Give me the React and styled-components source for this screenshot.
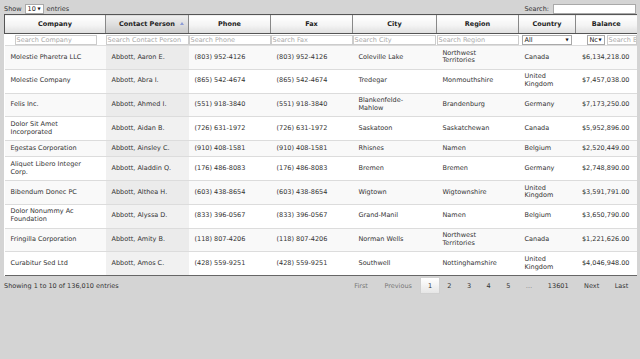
import React from "react";
import styled, { createGlobalStyle } from "styled-components";

const GlobalStyle = createGlobalStyle`
  html, body {
    margin: 0;
    padding: 0;
    background: #d4d4d4;
  }
  body {
    font-family: "DejaVu Sans", Verdana, sans-serif;
    font-size: 6.5px;
    color: #333;
  }
`;

const Wrapper = styled.div`
  padding: 3px 4px 0 4px;
  width: 632px;
`;

const TopBar = styled.div`
  display: flex;
  justify-content: space-between;
  align-items: center;
  height: 11px;
`;

const Length = styled.label`
  display: flex;
  align-items: center;
  gap: 3px;
`;

const SmallSelect = styled.div`
  display: flex;
  align-items: center;
  justify-content: space-between;
  box-sizing: border-box;
  width: ${p => p.$w}px;
  height: 10px;
  padding: 0 2px;
  background: #fff;
  border: 1px solid #a9a9a9;
  font-size: 6.5px;
  color: #222;
  &::after {
    content: "▼";
    font-size: 4px;
    color: #111;
  }
`;

const SearchLabel = styled.label`
  display: flex;
  align-items: center;
  gap: 4px;
`;

const SearchBox = styled.div`
  width: 83px;
  height: 10px;
  box-sizing: border-box;
  background: #fff;
  border: 1px solid #a9a9a9;
`;

const Table = styled.table`
  width: 632px;
  border-collapse: collapse;
  table-layout: fixed;
  background: #fff;
  border-bottom: 1px solid #666;
`;

const HeadCell = styled.th`
  position: relative;
  height: 18px;
  padding: 0;
  font-weight: bold;
  font-size: 6.5px;
  color: #222;
  text-align: center;
  background: ${p =>
    p.$sorted
      ? "linear-gradient(to bottom, #f0f0f0 0%, #dcdcdc 55%, #c8c8c8 100%)"
      : "linear-gradient(to bottom, #ffffff 0%, #f4f4f4 55%, #dedede 100%)"};
  border-top: 1px solid #555;
  border-bottom: 1px solid #555;
  border-left: 1px solid #888;
  &:first-child {
    border-left: 1px solid #555;
  }
`;

const SortArrow = styled.span`
  position: absolute;
  right: 4px;
  top: 7px;
  width: 0;
  height: 0;
  border-left: 2px solid transparent;
  border-right: 2px solid transparent;
  border-bottom: 3px solid #8c9bd6;
`;

const FilterRow = styled.tr`
  background: #fff;
`;

const FilterCell = styled.td`
  height: 11px;
  padding: 0;
  padding-left: ${p => p.$pad || 0}px;
  vertical-align: middle;
  overflow: hidden;
`;

const FilterInput = styled.div`
  box-sizing: border-box;
  flex: none;
  width: ${p => p.$w}px;
  height: 10px;
  border: 1px solid #ccc;
  background: #fff;
  color: #aaa;
  font-size: 6.5px;
  line-height: 8px;
  padding-left: 1px;
  overflow: hidden;
  white-space: nowrap;
`;

const FilterGroup = styled.div`
  display: flex;
  align-items: center;
  gap: 2px;
  padding-left: ${p => p.$pad || 0}px;
`;

const Row = styled.tr`
  background: ${p => (p.$odd ? "#f9f9f9" : "#fff")};
  border-top: 1px solid #dcdcdc;
`;

const Cell = styled.td`
  padding: 3.7px 10px 3.7px 6px;
  line-height: 7.7px;
  font-size: 6.5px;
  vertical-align: middle;
  color: #333;
  background: ${p => (p.$sorted ? (p.$odd ? "#ebebeb" : "#f1f1f1") : "transparent")};
  text-align: ${p => (p.$right ? "right" : "left")};
  ${p => p.$right && "padding-right: 7px; padding-left: 4px;"}
`;

const Footer = styled.div`
  display: flex;
  justify-content: space-between;
  align-items: flex-start;
  margin-top: 1px;
`;

const Info = styled.div`
  padding-top: 5px;
`;

const Pager = styled.div`
  display: flex;
  align-items: center;
`;

const PageButton = styled.span`
  display: inline-flex;
  align-items: center;
  justify-content: center;
  box-sizing: border-box;
  height: 17px;
  padding: 0 ${p => p.$px ?? 6.75}px;
  color: ${p => (p.$disabled ? "#777" : "#333")};
  background: ${p =>
    p.$current ? "linear-gradient(to bottom, #fff 0%, #e6e6e6 100%)" : "transparent"};
  border: 1px solid ${p => (p.$current ? "#d0d0d0" : "transparent")};
`;

const columns = [
  { key: "company", title: "Company", width: 101 },
  { key: "contact", title: "Contact Person", width: 83, sorted: true },
  { key: "phone", title: "Phone", width: 82 },
  { key: "fax", title: "Fax", width: 82 },
  { key: "city", title: "City", width: 84 },
  { key: "region", title: "Region", width: 82 },
  { key: "country", title: "Country", width: 57 },
  { key: "balance", title: "Balance", width: 61 }
];

const rows = [
  ["Molestie Pharetra LLC", "Abbott, Aaron E.", "(803) 952-4126", "(803) 952-4126", "Coleville Lake", "Northwest Territories", "Canada", "$6,134,218.00"],
  ["Molestie Company", "Abbott, Abra I.", "(865) 542-4674", "(865) 542-4674", "Tredegar", "Monmouthshire", "United Kingdom", "$7,457,038.00"],
  ["Felis Inc.", "Abbott, Ahmed I.", "(551) 918-3840", "(551) 918-3840", "Blankenfelde-Mahlow", "Brandenburg", "Germany", "$7,173,250.00"],
  ["Dolor Sit Amet Incorporated", "Abbott, Aidan B.", "(726) 631-1972", "(726) 631-1972", "Saskatoon", "Saskatchewan", "Canada", "$5,952,896.00"],
  ["Egestas Corporation", "Abbott, Ainsley C.", "(910) 408-1581", "(910) 408-1581", "Rhisnes", "Namen", "Belgium", "$2,520,449.00"],
  ["Aliquet Libero Integer Corp.", "Abbott, Aladdin Q.", "(176) 486-8083", "(176) 486-8083", "Bremen", "Bremen", "Germany", "$2,748,890.00"],
  ["Bibendum Donec PC", "Abbott, Althea H.", "(603) 438-8654", "(603) 438-8654", "Wigtown", "Wigtownshire", "United Kingdom", "$3,591,791.00"],
  ["Dolor Nonummy Ac Foundation", "Abbott, Alyssa D.", "(833) 396-0567", "(833) 396-0567", "Grand-Manil", "Namen", "Belgium", "$3,650,790.00"],
  ["Fringilla Corporation", "Abbott, Amity B.", "(118) 807-4206", "(118) 807-4206", "Norman Wells", "Northwest Territories", "Canada", "$1,221,626.00"],
  ["Curabitur Sed Ltd", "Abbott, Amos C.", "(428) 559-9251", "(428) 559-9251", "Southwell", "Nottinghamshire", "United Kingdom", "$4,046,948.00"]
];

const pages = [
  { label: "First", disabled: true, px: 7 },
  { label: "Previous", disabled: true, px: 7.5 },
  { label: "1", current: true, px: 6.5 },
  { label: "2" },
  { label: "3" },
  { label: "4" },
  { label: "5" },
  { label: "…", disabled: true },
  { label: "13601" },
  { label: "Next" },
  { label: "Last" }
];

const App = () => {
  return (
    <Wrapper>
      <GlobalStyle />
      <TopBar>
        <Length>
          Show <SmallSelect $w={19}>10</SmallSelect> entries
        </Length>
        <SearchLabel>
          Search: <SearchBox />
        </SearchLabel>
      </TopBar>
      <Table>
        <colgroup>
          {columns.map(c => (
            <col key={c.key} style={{ width: c.width }} />
          ))}
        </colgroup>
        <thead>
          <tr>
            {columns.map(c => (
              <HeadCell key={c.key} $sorted={c.sorted}>
                {c.title}
                {c.sorted && <SortArrow />}
              </HeadCell>
            ))}
          </tr>
        </thead>
        <tbody>
          <FilterRow>
            <FilterCell $pad={10}>
              <FilterInput $w={82}>Search Company</FilterInput>
            </FilterCell>
            <FilterCell>
              <FilterInput $w={83}>Search Contact Person</FilterInput>
            </FilterCell>
            <FilterCell>
              <FilterInput $w={82}>Search Phone</FilterInput>
            </FilterCell>
            <FilterCell>
              <FilterInput $w={82}>Search Fax</FilterInput>
            </FilterCell>
            <FilterCell>
              <FilterInput $w={83}>Search City</FilterInput>
            </FilterCell>
            <FilterCell>
              <FilterInput $w={82}>Search Region</FilterInput>
            </FilterCell>
            <FilterCell>
              <FilterGroup $pad={3}>
                <SmallSelect $w={50}>All</SmallSelect>
              </FilterGroup>
            </FilterCell>
            <FilterCell>
              <FilterGroup $pad={11}>
                <SmallSelect $w={18}>Nc</SmallSelect>
                <FilterInput $w={30}>Search B</FilterInput>
              </FilterGroup>
            </FilterCell>
          </FilterRow>
          {rows.map((r, i) => (
            <Row key={i} $odd={i % 2 === 0}>
              {r.map((v, j) => (
                <Cell
                  key={j}
                  $odd={i % 2 === 0}
                  $sorted={columns[j].sorted}
                  $right={j === 7}
                >
                  {v}
                </Cell>
              ))}
            </Row>
          ))}
        </tbody>
      </Table>
      <Footer>
        <Info>Showing 1 to 10 of 136,010 entries</Info>
        <Pager>
          {pages.map(p => (
            <PageButton
              key={p.label}
              $current={p.current}
              $disabled={p.disabled}
              $px={p.px}
            >
              {p.label}
            </PageButton>
          ))}
        </Pager>
      </Footer>
    </Wrapper>
  );
};

export default App;
